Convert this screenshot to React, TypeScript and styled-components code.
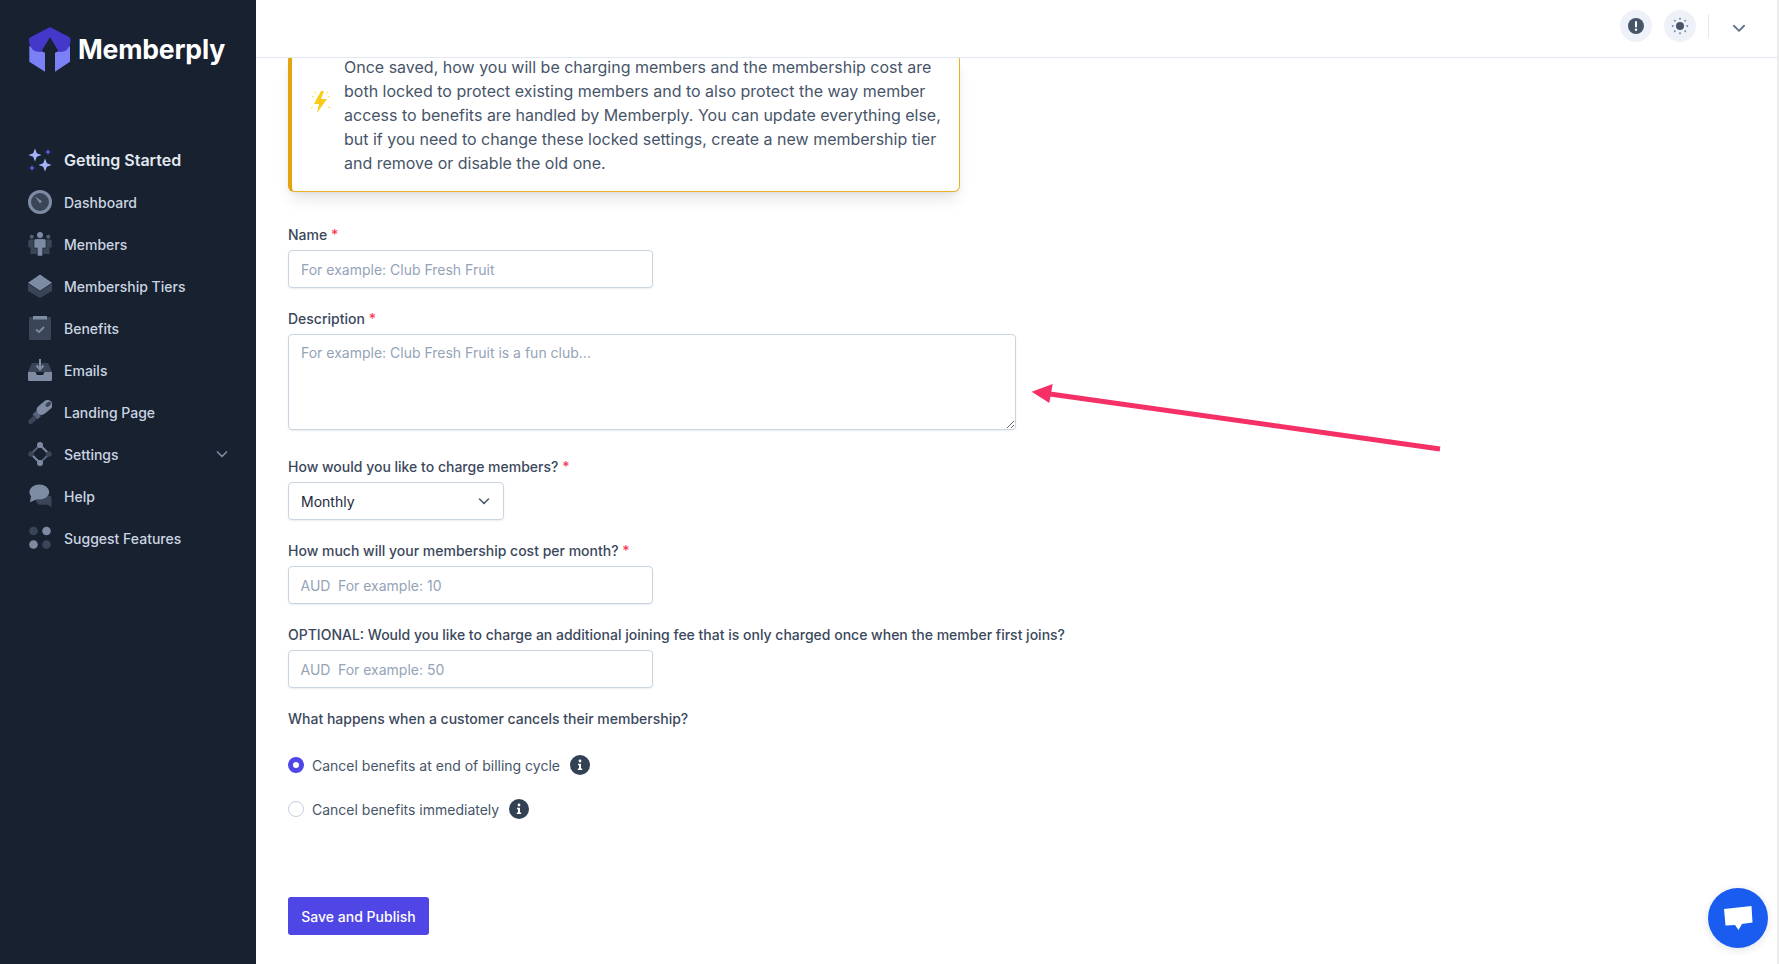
import React from "react";
import styled, { createGlobalStyle } from "styled-components";

const Global = createGlobalStyle`
  html, body { margin: 0; padding: 0; height: 100%; background: #fff; }
  #root { height: 100%; }
  * { box-sizing: border-box; }
  body { font-family: Inter, "Liberation Sans", sans-serif; -webkit-font-smoothing: antialiased; }
`;

const Page = styled.div`
  position: relative;
  display: flex;
  width: 100%;
  height: 100vh;
  overflow: hidden;
`;

const Sidebar = styled.aside`
  flex: 0 0 256px;
  background: #172130;
  padding: 27px 28px 0;
  display: flex;
  flex-direction: column;
`;

const Brand = styled.div`
  display: flex;
  align-items: center;
  gap: 7px;
  height: 45px;
  margin-bottom: 76px;
`;

const BrandName = styled.span`
  color: #fff;
  font-size: 26.6px;
  font-weight: 700;
  letter-spacing: -0.2px;
  margin-top: -2px;
`;

const Nav = styled.nav`
  display: flex;
  flex-direction: column;
  gap: 18px;
`;

const NavItem = styled.div<{ $strong?: boolean }>`
  display: flex;
  align-items: center;
  height: 24px;
  gap: 12px;
  margin-right: -2px;
  color: ${(p) => (p.$strong ? "#e2e8f0" : "#cbd5e1")};
  font-size: ${(p) => (p.$strong ? "16px" : "14px")};
  font-weight: ${(p) => (p.$strong ? 600 : 500)};
`;

const NavLabel = styled.span`
  flex: 1;
`;

const Main = styled.main`
  flex: 1;
  min-width: 0;
  display: flex;
  flex-direction: column;
  border-right: 2px solid #ececec;
`;

const Header = styled.header`
  flex: 0 0 58px;
  display: flex;
  align-items: center;
  justify-content: flex-end;
  padding: 0 29px 6px 0;
  border-bottom: 1px solid #e2e8f0;
  background: #fff;
`;

const RoundButton = styled.div`
  width: 32px;
  height: 32px;
  border-radius: 50%;
  background: #eef1f7;
  display: flex;
  align-items: center;
  justify-content: center;
  margin-right: 12px;
`;

const Divider = styled.div`
  width: 1px;
  height: 24px;
  background: #e2e8f0;
  margin: 0 21px 0 0;
`;

const Caret = styled.div`
  display: flex;
  margin-top: 4px;
`;

const Content = styled.div`
  flex: 1;
  min-height: 0;
  overflow: hidden;
  padding: 0 32px;
`;

const Alert = styled.div`
  width: 672px;
  margin: -4px 0 33px;
  display: flex;
  background: #fff;
  border: 1px solid #eab02a;
  border-left: 4px solid #e2a40f;
  border-radius: 6px;
  box-shadow: 0 10px 15px -3px rgba(15, 23, 42, 0.1), 0 4px 6px -4px rgba(15, 23, 42, 0.1);
  padding: 0 16px 16px 0;
`;

const AlertIcon = styled.div`
  flex: 0 0 52px;
  padding: 36px 0 0 19px;
`;

const AlertText = styled.p`
  margin: 0;
  font-size: 16px;
  line-height: 24px;
  color: #475569;
`;

const Field = styled.div<{ $gap?: number }>`
  margin-bottom: ${(p) => p.$gap ?? 21}px;
`;

const Label = styled.div`
  font-size: 14px;
  line-height: 20px;
  font-weight: 500;
  color: #3b485c;
  margin-bottom: 5px;
  white-space: nowrap;
`;

const Star = styled.span`
  color: #f43f5e;
`;

const controlBox = `
  display: block;
  height: 38px;
  background: #fff;
  border: 1px solid #cbd5e1;
  border-radius: 4px;
  box-shadow: 0 1px 2px rgba(15, 23, 42, 0.08);
  font-family: Inter, "Liberation Sans", sans-serif;
  font-size: 14px;
  outline: none;
`;

const TextInput = styled.input`
  ${controlBox}
  width: 365px;
  padding: 0 12px;
  color: #1e293b;
  &::placeholder { color: #94a3b8; opacity: 1; }
`;

const TextArea = styled.textarea`
  ${controlBox}
  width: 728px;
  height: 96px;
  padding: 8px 12px;
  line-height: 20px;
  resize: vertical;
  color: #1e293b;
  &::placeholder { color: #94a3b8; opacity: 1; }
`;

const Select = styled.select`
  ${controlBox}
  width: 216px;
  padding: 0 12px;
  color: #1e293b;
  appearance: none;
  background-image: url("data:image/svg+xml,%3Csvg xmlns='http://www.w3.org/2000/svg' viewBox='0 0 20 20' fill='none' stroke='%23475569' stroke-width='1.5' stroke-linecap='round' stroke-linejoin='round'%3E%3Cpath d='M5.5 8l4.5 4.5L14.500 8'/%3E%3C/svg%3E");
  background-repeat: no-repeat;
  background-size: 20px 20px;
  background-position: right 9px center;
`;

const PriceBox = styled.div`
  ${controlBox}
  display: flex;
  align-items: center;
  width: 365px;
  padding: 0 11.5px;
  gap: 7.5px;
`;

const Currency = styled.span`
  color: #94a3b8;
  font-size: 14px;
`;

const PriceInput = styled.input`
  flex: 1;
  min-width: 0;
  border: 0;
  outline: 0;
  padding: 0;
  background: transparent;
  font-family: inherit;
  font-size: 14px;
  &::placeholder { color: #94a3b8; opacity: 1; }
`;

const RadioGroup = styled.div`
  display: flex;
  flex-direction: column;
  gap: 20px;
  margin: 24px 0 76px;
`;

const RadioRow = styled.label`
  display: flex;
  align-items: center;
  height: 24px;
  font-size: 14px;
  color: #475569;
`;

const Radio = styled.input.attrs({ type: "radio" })`
  appearance: none;
  width: 16px;
  height: 16px;
  margin: 0 8px 0 0;
  border-radius: 50%;
  border: 1px solid #c3cde0;
  background: #fff;
  &:checked {
    border: 5px solid #4f46e5;
  }
`;

const InfoDot = styled.span`
  width: 20px;
  height: 20px;
  margin-left: 10px;
  border-radius: 50%;
  background: #334155;
  display: flex;
  align-items: center;
  justify-content: center;
`;

const PrimaryButton = styled.button`
  display: block;
  width: 141px;
  height: 38px;
  border: 0;
  border-radius: 3px;
  background: #4f46e5;
  color: #fff;
  font-family: inherit;
  font-size: 14px;
  font-weight: 500;
`;

const AnnotationArrow = styled.svg`
  position: absolute;
  left: 1020px;
  top: 375px;
  width: 430px;
  height: 85px;
  pointer-events: none;
`;

const ChatBubble = styled.div`
  position: absolute;
  left: 1708px;
  top: 888px;
  width: 60px;
  height: 60px;
  border-radius: 50%;
  background: #1a5cf0;
  box-shadow: 0 2px 8px rgba(15, 23, 42, 0.12);
  display: flex;
  align-items: center;
  justify-content: center;
`;

const L = "#7d8ba3";
const M = "#55627a";
const D = "#3a4658";

const Logo = () => (
  <svg width="43" height="45" viewBox="0 0 43 45" aria-hidden="true">
    <path d="M1.300 19 V34.700 L17 44.700 V25.700 Z" fill="#7b80f6" />
    <path d="M27 25.700 V44.700 L42 34.700 V19 Z" fill="#7b80f6" />
    <path d="M22 0 L41 10 Q42.500 10.700 42.500 12.500 V15 Q41 25 31.500 25 H31 L22 10.300 L13 25 H12.500 Q2.500 25 1 15 V12.500 Q1 10.700 3 10 Z" fill="#4338ca" />
  </svg>
);

const Sparkles = () => (
  <svg width="24" height="24" viewBox="0 0 24 24" aria-hidden="true">
    <path d="M7 0.500 L8.800 5.200 L13.500 7 L8.800 8.800 L7 13.500 L5.200 8.800 L0.500 7 L5.200 5.200 Z" fill="#a5b4fc" />
    <path d="M17 10.500 L18.800 15.200 L23.500 17 L18.800 18.800 L17 23.500 L15.200 18.800 L10.500 17 L15.200 15.200 Z" fill="#a5b4fc" />
    <path d="M20 1 L20.900 3.100 L23 4 L20.900 4.900 L20 7 L19.100 4.900 L17 4 L19.100 3.100 Z" fill="#5b57ea" />
    <path d="M4 17 L4.900 19.100 L7 20 L4.900 20.900 L4 23 L3.100 20.900 L1 20 L3.100 19.100 Z" fill="#5b57ea" />
  </svg>
);

const GaugeIcon = () => (
  <svg width="24" height="24" viewBox="0 0 24 24" aria-hidden="true">
    <circle cx="12" cy="12" r="10.500" fill={D} stroke={L} strokeWidth="3" />
    <path d="M7 6.500 L14 11.200 L12 13.600 Z" fill={L} />
  </svg>
);

const MembersIcon = () => (
  <svg width="24" height="24" viewBox="0 0 24 24" aria-hidden="true">
    <circle cx="3.700" cy="4.700" r="2" fill={M} />
    <circle cx="20.300" cy="4.700" r="2" fill={M} />
    <path d="M0.300 9 Q0.300 7.500 1.800 7.500 H22.200 Q23.700 7.500 23.700 9 V15.500 H21.500 V22 H2.500 V15.500 H0.300 Z" fill={D} />
    <circle cx="12" cy="3" r="3" fill={L} />
    <path d="M6 8.500 Q6 6.700 8 6.700 H16 Q18 6.700 18 8.500 V16 H14.700 V24 H9.300 V16 H6 Z" fill={L} stroke="#172130" strokeWidth="0.600" />
  </svg>
);

const CubeIcon = () => (
  <svg width="24" height="24" viewBox="0 0 24 24" aria-hidden="true">
    <path d="M0 9.500 V17 L12 24 L24 17 V9.500 L12 17.500 Z" fill={D} />
    <path d="M12 0.500 L24 8.700 L12 16.800 L0 8.700 Z" fill={L} />
  </svg>
);

const ClipboardIcon = () => (
  <svg width="24" height="24" viewBox="0 0 24 24" aria-hidden="true">
    <rect x="1" y="1" width="22" height="23" rx="1" fill={D} />
    <rect x="5" y="0" width="14" height="3.500" fill={L} />
    <path d="M8 13.500 L11 16 L16 11" fill="none" stroke={L} strokeWidth="1.800" />
  </svg>
);

const InboxIcon = () => (
  <svg width="24" height="24" viewBox="0 0 24 24" aria-hidden="true">
    <path d="M4 5 H20 L24 14 H0 Z" fill={D} />
    <path d="M0 14 H7.500 L9 17 H15 L16.500 14 H24 V22 Q24 23 23 23 H1 Q0 23 0 22 Z" fill={L} />
    <path d="M12 1 V10 M8.500 7.500 L12 11.500 L15.500 7.500" fill="none" stroke={L} strokeWidth="2" />
  </svg>
);

const BrushIcon = () => (
  <svg width="24" height="24" viewBox="0 0 24 24" aria-hidden="true">
    <path d="M5.500 19 L2.800 21.500" stroke={D} strokeWidth="5" strokeLinecap="round" />
    <path d="M10.500 13.500 L7 17" stroke={M} strokeWidth="7" />
    <path d="M19.500 5 L13.500 10" stroke={L} strokeWidth="10" strokeLinecap="round" />
    <ellipse cx="20.300" cy="4.300" rx="3.200" ry="1.900" transform="rotate(-40 20.300 4.300)" fill={D} />
  </svg>
);

const SettingsIcon = () => (
  <svg width="24" height="24" viewBox="0 0 24 24" aria-hidden="true">
    <path d="M12 3 L3 12 M21 12 L12 21" stroke={M} strokeWidth="2" />
    <path d="M12 3 L21 12 M3 12 L12 21" stroke={L} strokeWidth="2" />
    <circle cx="12" cy="3" r="3" fill={L} />
    <circle cx="12" cy="21" r="3" fill={L} />
    <circle cx="3" cy="12" r="2.800" fill={D} />
    <circle cx="21" cy="12" r="2.800" fill={D} />
  </svg>
);

const HelpIcon = () => (
  <svg width="24" height="24" viewBox="0 0 24 24" aria-hidden="true">
    <path d="M8 12 H22 Q23.500 12 23.500 14 V23 L19 20.800 H12 Q8 20 8 16 Z" fill={D} />
    <ellipse cx="11.300" cy="8" rx="10" ry="7.500" fill={L} />
    <path d="M3 12 L2 18.300 L9.500 15 Z" fill={L} />
  </svg>
);

const DotsIcon = () => (
  <svg width="24" height="24" viewBox="0 0 24 24" aria-hidden="true">
    <circle cx="5.500" cy="5" r="4.300" fill={D} />
    <circle cx="18.500" cy="5" r="4.300" fill={L} />
    <circle cx="5.500" cy="18.500" r="4.300" fill={L} />
    <circle cx="18.500" cy="18.500" r="4.300" fill={D} />
  </svg>
);

const Chevron = ({ color, size = 16 }: { color: string; size?: number }) => (
  <svg width={size} height={size} viewBox="0 0 16 16" fill="none" aria-hidden="true">
    <path d="M3.500 6 L8 10.500 L12.500 6" stroke={color} strokeWidth="1.700" strokeLinecap="round" strokeLinejoin="round" />
  </svg>
);

const AlertMark = () => (
  <svg width="18" height="18" viewBox="0 0 18 18" aria-hidden="true">
    <circle cx="9" cy="9" r="8" fill="#475569" />
    <rect x="8" y="4" width="2" height="6.500" rx="1" fill="#fff" />
    <circle cx="9" cy="12.800" r="1.200" fill="#fff" />
  </svg>
);

const SunMark = () => (
  <svg width="18" height="18" viewBox="0 0 18 18" aria-hidden="true">
    <circle cx="9" cy="9" r="4" fill="#475569" />
    <g fill="#7d8ba3">
      <circle cx="9" cy="1.700" r="1" />
      <circle cx="9" cy="16.300" r="1" />
      <circle cx="1.700" cy="9" r="1" />
      <circle cx="16.300" cy="9" r="1" />
      <circle cx="3.800" cy="3.800" r="1" />
      <circle cx="14.200" cy="3.800" r="1" />
      <circle cx="3.800" cy="14.200" r="1" />
      <circle cx="14.200" cy="14.200" r="1" />
    </g>
  </svg>
);

const Bolt = () => (
  <svg width="20" height="22" viewBox="0 0 20 22" aria-hidden="true">
    <path d="M10 0 L3 13 H8 L6 22 L16 8 H10 L13 0 Z" fill="#facc15" />
    <path d="M1 5 L3 6.200 M19 5 L17 6.200 M0 17 L2 16 M19.500 17 L17 16 M3.500 0.500 L4.500 2.500 M16.500 0.500 L15.500 2.500" stroke="#fde047" strokeWidth="1" fill="none" />
  </svg>
);

const Info = () => (
  <svg width="12" height="12" viewBox="0 0 12 12" aria-hidden="true">
    <circle cx="6" cy="2" r="1.400" fill="#fff" />
    <path d="M4 4.800 H7 V9.500 H8.200 V11 H3.800 V9.500 H5 V6.300 H4 Z" fill="#fff" />
  </svg>
);

const navItems: { label: string; icon: React.ReactNode; strong?: boolean; more?: boolean }[] = [
  { label: "Getting Started", icon: <Sparkles />, strong: true },
  { label: "Dashboard", icon: <GaugeIcon /> },
  { label: "Members", icon: <MembersIcon /> },
  { label: "Membership Tiers", icon: <CubeIcon /> },
  { label: "Benefits", icon: <ClipboardIcon /> },
  { label: "Emails", icon: <InboxIcon /> },
  { label: "Landing Page", icon: <BrushIcon /> },
  { label: "Settings", icon: <SettingsIcon />, more: true },
  { label: "Help", icon: <HelpIcon /> },
  { label: "Suggest Features", icon: <DotsIcon /> },
];

export default function App() {
  return (
    <Page>
      <Global />
      <Sidebar>
        <Brand>
          <Logo />
          <BrandName>Memberply</BrandName>
        </Brand>
        <Nav>
          {navItems.map((item) => (
            <NavItem key={item.label} $strong={item.strong}>
              {item.icon}
              <NavLabel>{item.label}</NavLabel>
              {item.more && <Chevron color="#7d8ba3" />}
            </NavItem>
          ))}
        </Nav>
      </Sidebar>
      <Main>
        <Header>
          <RoundButton><AlertMark /></RoundButton>
          <RoundButton><SunMark /></RoundButton>
          <Divider />
          <Caret><Chevron color="#64748b" size={18} /></Caret>
        </Header>
        <Content>
          <Alert>
            <AlertIcon><Bolt /></AlertIcon>
            <AlertText>
              Once saved, how you will be charging members and the membership cost are both locked to protect existing members and to also protect the way member access to benefits are handled by Memberply. You can update everything else, but if you need to change these locked settings, create a new membership tier and remove or disable the old one.
            </AlertText>
          </Alert>
          <Field>
            <Label>Name <Star>*</Star></Label>
            <TextInput placeholder="For example: Club Fresh Fruit" />
          </Field>
          <Field $gap={27}>
            <Label>Description <Star>*</Star></Label>
            <TextArea placeholder="For example: Club Fresh Fruit is a fun club..." />
          </Field>
          <Field>
            <Label>How would you like to charge members? <Star>*</Star></Label>
            <Select defaultValue="Monthly">
              <option>Monthly</option>
              <option>Yearly</option>
            </Select>
          </Field>
          <Field>
            <Label>How much will your membership cost per month? <Star>*</Star></Label>
            <PriceBox>
              <Currency>AUD</Currency>
              <PriceInput placeholder="For example: 10" />
            </PriceBox>
          </Field>
          <Field>
            <Label>OPTIONAL: Would you like to charge an additional joining fee that is only charged once when the member first joins?</Label>
            <PriceBox>
              <Currency>AUD</Currency>
              <PriceInput placeholder="For example: 50" />
            </PriceBox>
          </Field>
          <Label>What happens when a customer cancels their membership?</Label>
          <RadioGroup>
            <RadioRow>
              <Radio name="cancel" defaultChecked />
              Cancel benefits at end of billing cycle
              <InfoDot><Info /></InfoDot>
            </RadioRow>
            <RadioRow>
              <Radio name="cancel" />
              Cancel benefits immediately
              <InfoDot><Info /></InfoDot>
            </RadioRow>
          </RadioGroup>
          <PrimaryButton>Save and Publish</PrimaryButton>
        </Content>
      </Main>
      <AnnotationArrow viewBox="0 0 430 85" aria-hidden="true">
        <path d="M420 74 L30 19" stroke="#f43067" strokeWidth="5" fill="none" />
        <path d="M11.700 16.700 L32.700 9 L29.300 28 Z" fill="#f43067" />
      </AnnotationArrow>
      <ChatBubble>
        <svg width="30" height="26" viewBox="0 0 30 26" aria-hidden="true">
          <path d="M1 4 L28.500 1 L29.500 17.500 L19 19 L15.500 25 L12 20 L2.500 20.500 Z" fill="#fff" />
        </svg>
      </ChatBubble>
    </Page>
  );
}
